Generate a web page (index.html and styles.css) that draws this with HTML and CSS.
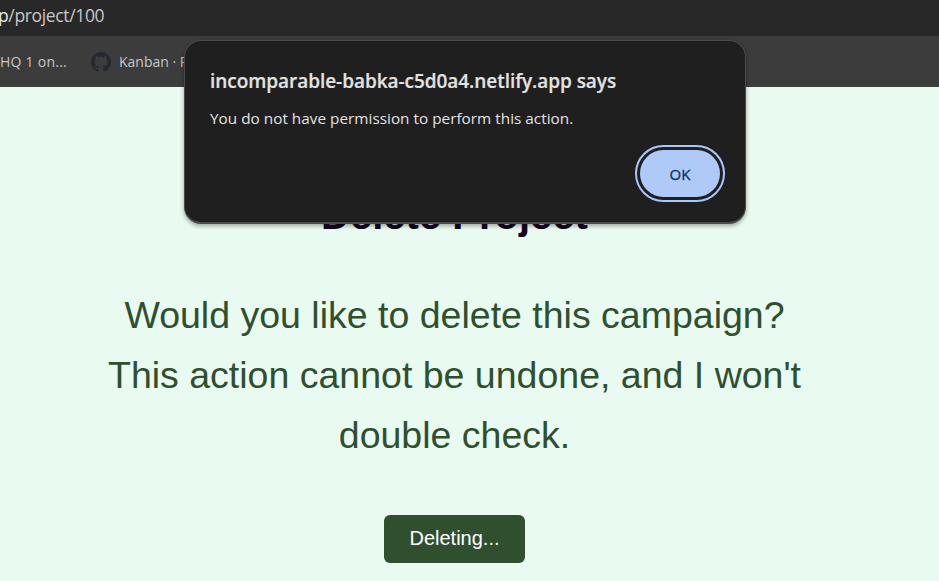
FILE: index.html
```html
<!DOCTYPE html>
<html lang="en">
<head>
<meta charset="utf-8">
<title>Delete Project</title>
<link rel="stylesheet" href="styles.css">
</head>
<body>
<header>
  <div class="address"><span class="host">p</span><span class="path">/project/100</span></div>
  <nav class="bookmarks">
    <span class="bookmark-hq">HQ 1 on...</span>
    <svg class="github" viewBox="0 0 16 16" aria-hidden="true"><path fill="currentColor" d="M8 0C3.58 0 0 3.58 0 8c0 3.54 2.29 6.53 5.47 7.59.4.07.55-.17.55-.38 0-.19-.01-.82-.01-1.49-2.01.37-2.53-.49-2.69-.94-.09-.23-.48-.94-.82-1.13-.28-.15-.68-.52-.01-.53.63-.01 1.08.58 1.23.82.72 1.21 1.87.87 2.33.66.07-.52.28-.87.51-1.07-1.78-.2-3.64-.89-3.64-3.95 0-.87.31-1.59.82-2.15-.08-.2-.36-1.02.08-2.12 0 0 .67-.21 2.2.82.64-.18 1.32-.27 2-.27s1.36.09 2 .27c1.53-1.04 2.2-.82 2.2-.82.44 1.1.16 1.92.08 2.12.51.56.82 1.27.82 2.15 0 3.07-1.87 3.75-3.65 3.95.29.25.54.73.54 1.48 0 1.07-.01 1.93-.01 2.2 0 .21.15.46.55.38A8.01 8.01 0 0 0 16 8c0-4.42-3.58-8-8-8z"/></svg>
    <span class="bookmark-kanban">Kanban · P</span>
  </nav>
</header>
<main>
  <h1>Delete Project</h1>
  <p class="question">Would you like to delete this campaign?<br>This action cannot be undone, and I won't<br>double check.</p>
  <button class="delete" type="button">Deleting...</button>
</main>
<section class="dialog" role="alertdialog">
  <h2>incomparable-babka-c5d0a4.netlify.app says</h2>
  <p>You do not have permission to perform this action.</p>
  <button class="ok" type="button">OK</button>
</section>
</body>
</html>
```
FILE: styles.css
```css
* { box-sizing: border-box; }
body {
  margin: 0;
  height: 581px;
  overflow: hidden;
  background: #e9faf0;
  font-family: "Liberation Sans", Arial, sans-serif;
}
header {
  font-family: "Open Sans", "Noto Sans", sans-serif;
  white-space: nowrap;
}
.address {
  height: 36px;
  background: #282828;
  color: #c7c7c7;
  font-size: 17.5px;
  line-height: 30px;
  letter-spacing: -0.35px;
}
.host { color: #e8e8e8; margin-left: -2px; }
.bookmarks {
  height: 51px;
  background: #3c3c3c;
  color: #c7c7c7;
  display: flex;
  align-items: center;
  font-size: 14px;
}
.bookmark-hq { width: 91px; letter-spacing: 0.25px; }
.github { width: 20px; height: 20px; margin-right: 8px; color: #24292f; }
main {
  width: 909px;
  display: flex;
  flex-direction: column;
  align-items: center;
}
h1 {
  margin: 104px 0 0;
  font-size: 40px;
  line-height: 48px;
  color: #14051f;
}
.question {
  margin: 46px 0 0;
  font-size: 37.5px;
  line-height: 60px;
  text-align: center;
  color: #2f4f2f;
}
.delete {
  width: 141px;
  height: 48px;
  margin-top: 50px;
  padding: 0 0 2px;
  border: 0;
  border-radius: 6px;
  background: #2f4f2f;
  color: #fff;
  font: 20px "Liberation Sans", Arial, sans-serif;
}
.dialog {
  position: absolute;
  left: 184px;
  top: 40px;
  width: 562px;
  height: 184px;
  padding: 25px 25px 0 25px;
  border: 1px solid #4b4b4b;
  border-bottom-width: 2px;
  border-radius: 17px;
  background: #1f1f1f;
  box-shadow: 0 2px 4px rgba(0, 0, 0, .35);
  display: flex;
  flex-direction: column;
  font-family: "Open Sans", "Noto Sans", sans-serif;
}
.dialog h2 {
  margin: 0;
  font-size: 19px;
  font-weight: 600;
  line-height: 30px;
  letter-spacing: -0.05px;
  color: #e3e3e3;
  -webkit-text-stroke: 0.2px currentColor;
  white-space: nowrap;
}
.dialog p {
  margin: 9px 0 0;
  font-size: 15.3px;
  line-height: 26px;
  letter-spacing: 0.02px;
  color: #e3e3e3;
  white-space: nowrap;
}
.ok {
  align-self: flex-end;
  width: 80px;
  height: 47px;
  margin: 19px 0 0;
  padding: 0;
  border: 0;
  border-radius: 24px;
  background: #afcaf7;
  color: #0b3167;
  font: 500 15px "Open Sans", "Noto Sans", sans-serif;
  -webkit-text-stroke: 0.3px currentColor;
  outline: 2px solid #a8c7fa;
  outline-offset: 3px;
}
```
